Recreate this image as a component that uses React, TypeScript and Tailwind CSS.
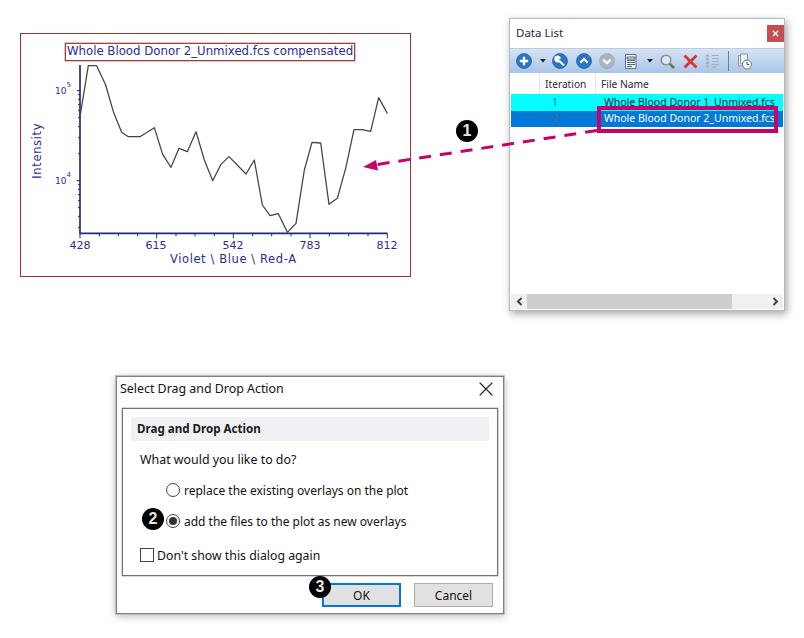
import { X } from "lucide-react";

const curve =
  "210,275 235,122 260,122 287,180 310,260 335,322 355,335 390,335 433,308 458,388 483,427 507,370 532,380 558,320 583,405 608,467 633,418 657,395 708,447 733,405 757,540 780,572 805,566 832,622 858,595 883,435 906,352 932,354 957,538 982,520 1007,430 1032,314 1056,314 1082,319 1106,218 1132,265";

const yTicks = [209, 223, 239, 257, 278, 305, 338, 386, 479, 493, 509, 527, 548, 574, 608];
const xMinor = [268, 325, 383, 498, 555, 613, 728, 785, 843, 958, 1016, 1074];
const xLabels = [
  { x: 80, t: "428" },
  { x: 156, t: "615" },
  { x: 233, t: "542" },
  { x: 310, t: "783" },
  { x: 387, t: "812" },
];

function Plot() {
  return (
    <div className="absolute left-[20px] top-[33px] w-[391px] h-[244px] border border-[#a03030] font-['DejaVu_Sans',sans-serif] text-[#2b2b9b]">
      <div className="absolute left-[44px] top-[9px] w-[290px] h-[18px] border border-[#a03c3c] shadow-[0_0_0_0.5px_#c88] flex items-center justify-center text-[11.75px] leading-none whitespace-nowrap">
        Whole Blood Donor 2_Unmixed.fcs compensated
      </div>
      <svg className="absolute left-[-11px] top-[-9px]" width="410" height="260" viewBox="0 0 1230 780" fill="none">
        <path d="M210 120V625H1132" stroke="#1c2f70" strokeWidth="5" />
        <path d="M210 197H200M210 467H200" stroke="#1c2f70" strokeWidth="3" />
        {yTicks.map((y) => (
          <path key={y} d={`M210 ${y}H204`} stroke="#1c2f70" strokeWidth="3" />
        ))}
        {[210, 440, 670, 900, 1132].map((x) => (
          <path key={x} d={`M${x} 625V640`} stroke="#1c2f70" strokeWidth="3" />
        ))}
        {xMinor.map((x) => (
          <path key={x} d={`M${x} 625V634`} stroke="#1c2f70" strokeWidth="3" />
        ))}
        <polyline points={curve} stroke="#444444" strokeWidth="3.8" strokeLinejoin="round" />
      </svg>
      <div className="absolute left-[34px] top-[53px] text-[9px] leading-none">
        10<sup className="text-[7px] align-super">5</sup>
      </div>
      <div className="absolute left-[34px] top-[143px] text-[9px] leading-none">
        10<sup className="text-[7px] align-super">4</sup>
      </div>
      <div className="absolute left-[-16px] top-[111px] w-[66px] -rotate-90 text-center text-[11.5px] tracking-[0.65px] leading-none">
        Intensity
      </div>
      {xLabels.map((l) => (
        <div key={l.t} className="absolute top-[206px] w-[30px] text-center text-[11px] leading-none" style={{ left: l.x - 36 }}>
          {l.t}
        </div>
      ))}
      <div className="absolute left-[149px] top-[220px] text-[11.5px] tracking-[0.6px] leading-none whitespace-nowrap">
        Violet \ Blue \ Red-A
      </div>
    </div>
  );
}

function RoundIcon({ kind, grey }: { kind: "plus" | "wrench" | "up" | "down"; grey?: boolean }) {
  const fill = grey ? "#a9b4c0" : "#2a76c4";
  return (
    <svg width="16" height="16" viewBox="0 0 16 16" fill="none">
      <circle cx="8" cy="8" r="7.5" fill={fill} stroke={grey ? "#97a3b0" : "#1b5c9f"} strokeWidth="0.7" />
      {kind === "plus" && <path d="M8 3.8V12.2M3.8 8H12.2" stroke="white" strokeWidth="2.4" />}
      {kind === "wrench" && (
        <path d="M11.5 12 L7 7.5 M7.8 5 a2.6 2.6 0 0 0-3.4-1 L6 5.8 l-.8 .9 -1.8-1.6 a2.6 2.6 0 0 0 3.6 3.2" stroke="white" strokeWidth="2" strokeLinecap="round" />
      )}
      {kind === "up" && <path d="M4.3 9.6L8 6l3.7 3.6" stroke="white" strokeWidth="2.2" />}
      {kind === "down" && <path d="M4.3 6.6L8 10.2l3.7-3.6" stroke="white" strokeWidth="2.2" />}
    </svg>
  );
}

function Caret() {
  return (
    <svg width="6" height="4" viewBox="0 0 6 4">
      <path d="M0 0H6L3 3.5Z" fill="#222" />
    </svg>
  );
}

function DataList() {
  return (
    <div className="absolute left-[509px] top-[18px] w-[276px] h-[293px] bg-white border border-[#b4b8bf] shadow-[2px_3px_8px_rgba(0,0,0,0.35)] flex flex-col font-['Noto_Sans',sans-serif] text-[#1c2b3a]">
      <div className="h-[29px] shrink-0 flex items-center justify-between pl-[6px] pr-[0px]">
        <span className="text-[11.5px] -mt-[2px]">Data List</span>
        <div className="size-[17px] bg-[#c4504f] flex items-center justify-center">
          <X className="size-[9px] text-white" strokeWidth={3.5} />
        </div>
      </div>
      <div className="h-[25px] shrink-0 bg-gradient-to-b from-[#d5e3f5] to-[#a9c5e8] flex items-center pl-[6px] border-t border-[#c3cad3]">
        <RoundIcon kind="plus" />
        <span className="ml-[8px]"><Caret /></span>
        <span className="ml-[6px]"><RoundIcon kind="wrench" /></span>
        <span className="ml-[8px]"><RoundIcon kind="up" /></span>
        <span className="ml-[7px]"><RoundIcon kind="down" grey /></span>
        <svg className="ml-[8px]" width="16" height="17" viewBox="0 0 16 17" fill="none">
          <path d="M2.5 1.5H13V15.5H2.5Z" fill="#f3f6fa" stroke="#5e6d80" />
          <path d="M4 4H12V6H4ZM4 7.5H12M4 9.5H12M4 11.5H12M4 13.5H9" stroke="#51637a" strokeWidth="1" />
        </svg>
        <span className="ml-[8px]"><Caret /></span>
        <svg className="ml-[6px]" width="17" height="17" viewBox="0 0 17 17" fill="none">
          <circle cx="7" cy="7" r="4.8" fill="#dfe8f0" stroke="#8a8f92" strokeWidth="1.6" />
          <path d="M10.8 10.8L15 15" stroke="#5f7b4a" strokeWidth="2.6" />
        </svg>
        <svg className="ml-[7px]" width="15" height="15" viewBox="0 0 15 15" fill="none">
          <path d="M1.5 1.5L13.5 13.5M13.5 1.5L1.5 13.5" stroke="#d9362b" strokeWidth="2.8" />
        </svg>
        <svg className="ml-[7px]" width="15" height="16" viewBox="0 0 15 16" fill="none">
          <path d="M2.5 1L5 3.5H0ZM2.5 15L0 12.5H5Z" fill="#a6adb5" />
          <circle cx="2.5" cy="6" r="1.6" fill="#a6adb5" />
          <circle cx="2.5" cy="10" r="1.6" fill="#a6adb5" />
          <path d="M7 2.5H14M7 5.5H14M7 8.5H14M7 11.5H14M7 14H12" stroke="#a6adb5" />
        </svg>
        <div className="ml-[8px] w-px h-[20px] bg-[#6d7f94]" />
        <svg className="ml-[8px]" width="16" height="17" viewBox="0 0 16 17" fill="none">
          <path d="M1.5 2.5H9V13H1.5Z" fill="#eef1f5" stroke="#8c96a1" />
          <path d="M3.5 1H10.5V11H3.5Z" fill="#eef1f5" stroke="#8c96a1" />
          <circle cx="10" cy="11.5" r="4.5" fill="#f7f7f7" stroke="#6f7a86" />
          <path d="M10 8.8V11.5H12.2" stroke="#4c5661" />
        </svg>
      </div>
      <div className="h-[21px] shrink-0 flex items-center text-[10.2px] ml-[1px]">
        <div className="w-[28px] h-full" />
        <div className="w-[56px] h-full border-l border-[#e3e6ea] pl-[5px] pt-[2px] flex items-center">Iteration</div>
        <div className="h-full border-l border-[#e3e6ea] pl-[5px] pt-[2px] flex items-center">File Name</div>
      </div>
      <div className="mx-[1px] h-[17px] shrink-0 bg-[#00ffff] flex items-center text-[10.5px] whitespace-nowrap overflow-hidden">
        <span className="w-[93px] pl-[41px] text-[#0d6ab8]">1</span>
        <span className="text-[#0d2730]">Whole Blood Donor 1_Unmixed.fcs</span>
      </div>
      <div className="mx-[1px] h-[16px] shrink-0 bg-[#0078d7] flex items-center text-[10.5px] whitespace-nowrap overflow-hidden">
        <span className="w-[93px] pl-[41px] text-[#5a6b7c]">2</span>
        <span className="text-white">Whole Blood Donor 2_Unmixed.fcs</span>
      </div>
      <div className="flex-1" />
      <div className="mx-[1px] mb-[1px] h-[15px] shrink-0 bg-[#f0f0f0] flex items-center">
        <div className="w-[16px] flex justify-center">
          <svg width="7" height="9" viewBox="0 0 7 9" fill="none"><path d="M5.5 1L2 4.5L5.5 8" stroke="#444" strokeWidth="2" /></svg>
        </div>
        <div className="w-[205px] h-full bg-[#cdcdcd]" />
        <div className="flex-1" />
        <div className="w-[16px] flex justify-center">
          <svg width="7" height="9" viewBox="0 0 7 9" fill="none"><path d="M1.5 1L5 4.5L1.5 8" stroke="#444" strokeWidth="2" /></svg>
        </div>
      </div>
    </div>
  );
}

function Radio({ checked }: { checked?: boolean }) {
  return (
    <span className="size-[14px] shrink-0 rounded-full border border-[#444] bg-white flex items-center justify-center">
      {checked && <span className="size-[8px] rounded-full bg-[#333]" />}
    </span>
  );
}

function Dialog() {
  return (
    <div className="absolute left-[116px] top-[376px] w-[388px] h-[238px] bg-white border border-[#808080] shadow-[0_0_0_1px_#c0c0c0,0_2px_8px_rgba(0,0,0,0.3)] flex flex-col font-['Noto_Sans',sans-serif] text-[#111] text-[12px]">
      <div className="h-[24px] mb-[7px] shrink-0 flex items-center justify-between pl-[3px] pr-[5px]">
        <span className="text-[12.4px]">Select Drag and Drop Action</span>
        <X className="size-[24px] text-[#222]" strokeWidth={1.1} />
      </div>
      <div className="mx-[5px] h-[168px] shrink-0 border border-[#707070] shadow-[0_0_0_0.5px_#b0b0b0] pt-[8px] px-[8px] flex flex-col">
        <div className="h-[24px] bg-[#f0f0f5] flex items-center pl-[6px] font-bold text-[11.6px] text-[#1a1a1a]">Drag and Drop Action</div>
        <div className="mt-[10px] ml-[9px] leading-[18px] text-[12.4px]">What would you like to do?</div>
        <div className="mt-[12px] ml-[35px] h-[18px] flex items-center gap-[4px] text-[12px]">
          <Radio />
          <span className="pt-[2px]">replace the existing overlays on the plot</span>
        </div>
        <div className="mt-[13px] ml-[35px] h-[18px] flex items-center gap-[4px] text-[12px]">
          <Radio checked />
          <span className="pt-[2px]">add the files to the plot as new overlays</span>
        </div>
        <div className="mt-[16px] ml-[9px] h-[18px] flex items-center gap-[3px] text-[12.3px]">
          <span className="size-[14px] border border-[#444] bg-white" />
          <span className="pt-[2px]">Don't show this dialog again</span>
        </div>
      </div>
      <div className="mt-[7px] flex justify-end gap-[13px] pr-[10px]">
        <div className="w-[79px] h-[24px] pt-[2px] border-2 border-[#0078d7] bg-[#e1e1e1] flex items-center justify-center">OK</div>
        <div className="w-[79px] h-[24px] pt-[2px] border border-[#adadad] bg-[#e1e1e1] flex items-center justify-center">Cancel</div>
      </div>
    </div>
  );
}

function Badge({ n, className }: { n: number; className: string }) {
  return (
    <div className={`absolute size-[22px] rounded-full bg-black text-[#e8e8e8] flex items-center justify-center font-['Liberation_Sans',sans-serif] font-bold text-[16px] leading-none ${className}`}>
      {n}
    </div>
  );
}

export default function App() {
  return (
    <div className="relative w-[804px] h-[638px] bg-white overflow-hidden">
      <Plot />
      <DataList />
      <Dialog />

      {/* pink callout on the second file, and its arrow */}
      <div className="absolute left-[597px] top-[106px] w-[181px] h-[27px] border-[4px] border-[#c8006e]" />
      <svg className="absolute left-[355px] top-[120px]" width="250" height="55" viewBox="0 0 250 55" fill="none">
        <path d="M242 10.5L22 44.5" stroke="#c8006e" strokeWidth="3" strokeDasharray="12 9" />
        <path d="M8 47L21 40L23 50.5Z" fill="#c8006e" />
      </svg>

      <Badge n={1} className="left-[456px] top-[120px]" />
      <Badge n={2} className="left-[142px] top-[508px]" />
      <Badge n={3} className="left-[309px] top-[576px]" />
    </div>
  );
}
